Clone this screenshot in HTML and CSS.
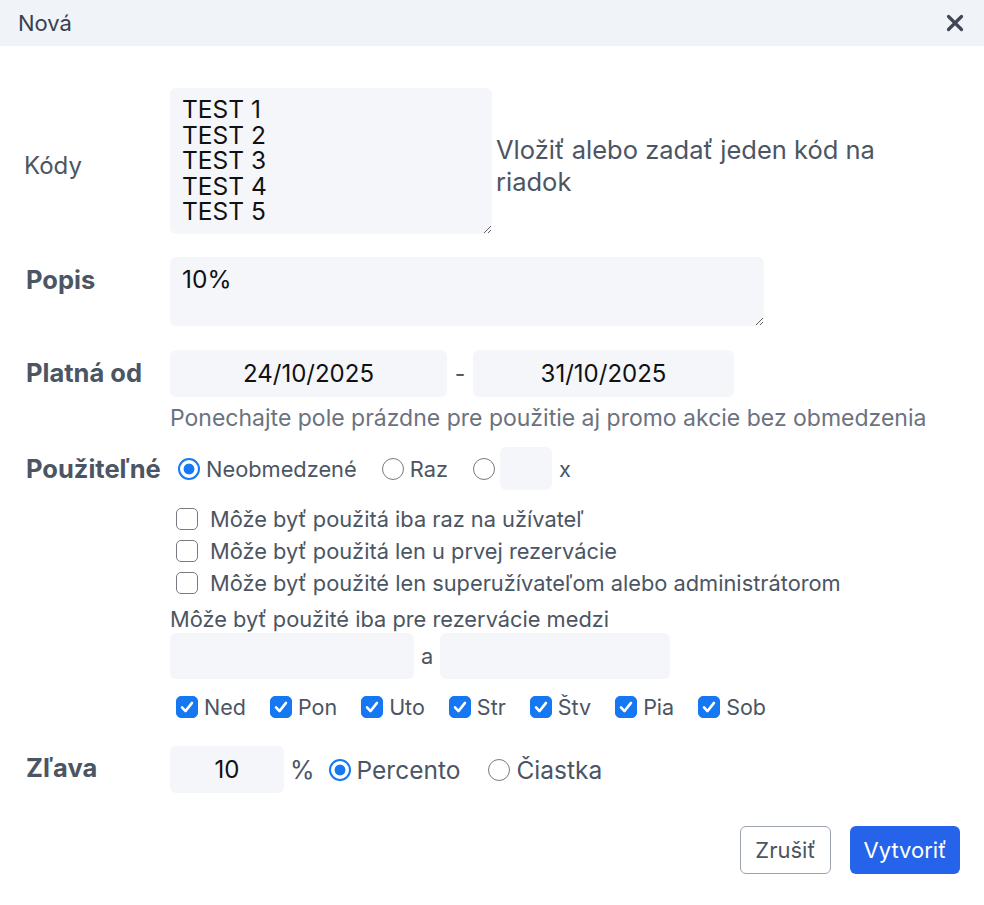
FILE: index.html
```html
<!DOCTYPE html>
<html lang="sk">
<head>
<meta charset="utf-8">
<title>Nová</title>
<link rel="stylesheet" href="styles.css">
</head>
<body>
<div class="modal">
  <header class="modal-head">
    <span class="title">Nová</span>
    <button class="close" aria-label="Zavrieť">
      <svg width="18" height="18" viewBox="0 0 18 18"><path d="M2.5 2.5 L15.5 15.5 M15.5 2.5 L2.5 15.5" stroke="#3f4654" stroke-width="3.2" stroke-linecap="round"/></svg>
    </button>
  </header>

  <div class="modal-body">
    <div class="row row-codes">
      <label class="lbl lbl-plain">Kódy</label>
      <div class="ctrl ctrl-codes">
        <textarea class="field codes">TEST 1
TEST 2
TEST 3
TEST 4
TEST 5</textarea>
        <span class="hint">Vložiť alebo zadať jeden kód na riadok</span>
      </div>
    </div>

    <div class="row row-desc">
      <label class="lbl">Popis</label>
      <div class="ctrl">
        <textarea class="field desc">10%</textarea>
      </div>
    </div>

    <div class="row row-dates">
      <label class="lbl">Platná od</label>
      <div class="ctrl">
        <div class="dates">
          <input class="field date date-from" value="24/10/2025">
          <span class="dash">-</span>
          <input class="field date date-to" value="31/10/2025">
        </div>
        <p class="help">Ponechajte pole prázdne pre použitie aj promo akcie bez obmedzenia</p>
      </div>
    </div>

    <div class="row row-usage">
      <label class="lbl lbl-usage">Použiteľné</label>
      <div class="ctrl">
        <div class="usage-line">
          <span class="opt"><span class="radio on"></span>Neobmedzené</span>
          <span class="opt"><span class="radio"></span>Raz</span>
          <span class="opt opt-count"><span class="radio"></span><input class="field count"><span class="times">x</span></span>
        </div>
        <div class="checks">
          <span class="check"><span class="cb"></span>Môže byť použitá iba raz na užívateľ</span>
          <span class="check"><span class="cb"></span>Môže byť použitá len u prvej rezervácie</span>
          <span class="check"><span class="cb"></span>Môže byť použité len superužívateľom alebo administrátorom</span>
        </div>
        <p class="between-label">Môže byť použité iba pre rezervácie medzi</p>
        <div class="between">
          <input class="field time time-from">
          <span class="and">a</span>
          <input class="field time time-to">
        </div>
        <div class="days">
          <span class="day"><span class="cb on"><svg viewBox="0 0 22 22"><path d="M5.5 11.5 L9.3 15.5 L16.5 6.5" fill="none" stroke="#fff" stroke-width="2.8" stroke-linecap="round" stroke-linejoin="round"/></svg></span>Ned</span>
          <span class="day"><span class="cb on"><svg viewBox="0 0 22 22"><path d="M5.5 11.5 L9.3 15.5 L16.5 6.5" fill="none" stroke="#fff" stroke-width="2.8" stroke-linecap="round" stroke-linejoin="round"/></svg></span>Pon</span>
          <span class="day"><span class="cb on"><svg viewBox="0 0 22 22"><path d="M5.5 11.5 L9.3 15.5 L16.5 6.5" fill="none" stroke="#fff" stroke-width="2.8" stroke-linecap="round" stroke-linejoin="round"/></svg></span>Uto</span>
          <span class="day"><span class="cb on"><svg viewBox="0 0 22 22"><path d="M5.5 11.5 L9.3 15.5 L16.5 6.5" fill="none" stroke="#fff" stroke-width="2.8" stroke-linecap="round" stroke-linejoin="round"/></svg></span>Str</span>
          <span class="day"><span class="cb on"><svg viewBox="0 0 22 22"><path d="M5.5 11.5 L9.3 15.5 L16.5 6.5" fill="none" stroke="#fff" stroke-width="2.8" stroke-linecap="round" stroke-linejoin="round"/></svg></span>Štv</span>
          <span class="day"><span class="cb on"><svg viewBox="0 0 22 22"><path d="M5.5 11.5 L9.3 15.5 L16.5 6.5" fill="none" stroke="#fff" stroke-width="2.8" stroke-linecap="round" stroke-linejoin="round"/></svg></span>Pia</span>
          <span class="day"><span class="cb on"><svg viewBox="0 0 22 22"><path d="M5.5 11.5 L9.3 15.5 L16.5 6.5" fill="none" stroke="#fff" stroke-width="2.8" stroke-linecap="round" stroke-linejoin="round"/></svg></span>Sob</span>
        </div>
      </div>
    </div>

    <div class="row row-discount">
      <label class="lbl">Zľava</label>
      <div class="ctrl discount">
        <input class="field amount" value="10">
        <span class="pct">%</span>
        <span class="opt opt-lg"><span class="radio on"></span>Percento</span>
        <span class="opt opt-lg"><span class="radio"></span>Čiastka</span>
      </div>
    </div>
  </div>

  <footer class="modal-foot">
    <button class="btn btn-cancel">Zrušiť</button>
    <button class="btn btn-primary">Vytvoriť</button>
  </footer>
</div>
</body>
</html>
```

FILE: styles.css
```css
* { box-sizing: border-box; }
html, body { margin: 0; padding: 0; background: #fff; }
body {
  font-family: Inter, "Liberation Sans", Arial, sans-serif;
  color: #4b5563;
}
.modal { width: 984px; min-height: 905px; background: #fff; }

.modal-head {
  height: 46px;
  background: #f0f3f8;
  display: flex;
  align-items: center;
  justify-content: space-between;
  padding: 0 20px 0 18px;
}
.title { font-size: 22px; line-height: 26px; color: #374151; }
.close {
  border: 0; background: transparent; padding: 0; margin: 0;
  width: 18px; height: 18px; display: flex; cursor: pointer;
}

.modal-body { padding-top: 42px; }

.row { display: flex; }
.lbl {
  width: 170px;
  flex: none;
  padding-left: 26px;
  font-size: 25.5px;
  line-height: 30px;
  font-weight: bold;
  color: #4b5563;
}
.lbl-plain { font-weight: normal; font-size: 24px; padding-left: 24px; align-self: center; padding-top: 9px; }
.ctrl { flex: 1; min-width: 0; }

.field {
  font-family: Inter, "Liberation Sans", Arial, sans-serif;
  background: #f4f6fa;
  border: 0;
  border-radius: 6px;
  color: #111;
  outline: none;
}
textarea.field { resize: both; display: block; }

.ctrl-codes { display: flex; align-items: center; }
.codes {
  width: 322px; height: 146px;
  font-size: 24.5px; line-height: 25.6px;
  padding: 9px 12px;
}
.hint {
  font-size: 25.5px; line-height: 32px;
  width: 400px; margin-left: 4px; padding-top: 9px;
  color: #4b5563;
}

.row-desc { margin-top: 23px; }
.row-desc .lbl { padding-top: 8px; }
.desc {
  width: 594px; height: 69px;
  font-size: 24.5px; line-height: 26px;
  padding: 9px 12px;
}

.row-dates { margin-top: 24px; }
.row-dates .lbl { padding-top: 8px; }
.dates { display: flex; align-items: center; }
.date {
  height: 47px; font-size: 24px; text-align: center; padding: 0;
}
.date-from { width: 277px; }
.date-to { width: 261px; }
.dash { width: 26px; text-align: center; font-size: 23px; }
.help {
  margin: 8px 0 0;
  font-size: 23px; line-height: 26px;
  color: #6b7280;
}

.row-usage { margin-top: 16px; }
.lbl-usage { padding-top: 7px; }
.usage-line { display: flex; align-items: center; height: 43px; }
.opt { display: flex; align-items: center; font-size: 21.8px; line-height: 26px; color: #4b5563; margin-right: 17px; }
.opt .radio { margin: 0 6px 0 8px; }
.opt-count { margin-right: 0; }
.opt-count .radio { margin-right: 5px; }
.count { width: 52px; height: 43px; }
.times { margin-left: 7px; font-size: 21.8px; }

.radio {
  width: 22px; height: 22px; flex: none;
  border-radius: 50%;
  border: 1.5px solid #777b82;
  background: #fff;
  display: inline-block;
}
.radio.on {
  border: 2px solid #1679f5;
  background: radial-gradient(circle, #1679f5 0 5px, #fff 5.8px);
}

.checks { display: flex; flex-direction: column; margin-top: 13px; }
.check { display: flex; align-items: center; height: 32px; font-size: 21.8px; color: #4b5563; }
.check .cb { margin: 0 12px 0 6px; }

.cb {
  width: 22px; height: 22px; flex: none;
  border: 1.5px solid #777b82;
  border-radius: 5px;
  background: #fff;
  display: inline-flex;
}
.cb.on { background: #1677f2; border-color: #1677f2; }
.cb svg { width: 100%; height: 100%; }

.between-label { margin: 6px 0 0; font-size: 21.8px; line-height: 28px; color: #4b5563; }
.between { display: flex; align-items: center; }
.time { height: 46px; }
.time-from { width: 244px; }
.time-to { width: 230px; }
.and { width: 26px; text-align: center; font-size: 21.8px; }

.days { display: flex; align-items: center; margin-top: 16px; }
.day { display: flex; align-items: center; font-size: 21.5px; line-height: 24px; color: #4b5563; margin-right: 18px; }
.day .cb { margin: 0 6px 0 6px; }

.row-discount { margin-top: 27px; }
.row-discount .lbl { padding-top: 7px; }
.discount { display: flex; align-items: center; }
.amount { width: 114px; height: 47px; text-align: center; font-size: 24px; padding: 0; }
.pct { font-size: 25px; margin: 0 14px 0 6px; }
.opt-lg { font-size: 24.5px; margin-right: 28px; }
.opt-lg .radio { margin: 0 6px 0 0; }

.modal-foot {
  display: flex; justify-content: flex-end; gap: 19px;
  padding: 33px 24px 0 0;
}
.btn {
  font-family: Inter, "Liberation Sans", Arial, sans-serif;
  font-size: 22px; height: 48px; border-radius: 6px; padding: 0 6px; cursor: pointer;
}
.btn-cancel { background: #fff; border: 1.5px solid #9ca3af; color: #4b5563; width: 91px; }
.btn-primary { background: #2563eb; border: 0; color: #fff; width: 110px; }
```
